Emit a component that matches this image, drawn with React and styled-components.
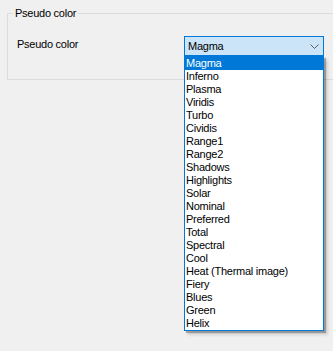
import React from "react";
import styled, { createGlobalStyle } from "styled-components";

const Global = createGlobalStyle`
  html, body { margin: 0; padding: 0; background: #f0f0f0; }
  body { font-family: "Liberation Sans", Arial, sans-serif; font-size: 11px; letter-spacing: -0.25px; color: #000; overflow: hidden; }
  #root { width: 333px; height: 351px; overflow: hidden; }
`;

const Page = styled.div`
  padding: 7px 0 0 7px;
  width: 333px;
  height: 351px;
  box-sizing: border-box;
`;

const GroupBox = styled.fieldset`
  margin: 0;
  width: 360px;
  height: 73px;
  box-sizing: border-box;
  border: 1px solid #dcdcdc;
  padding: 0 0 0 5px;
`;

const Legend = styled.legend`
  padding: 0 2px;
  font-size: 11px;
  line-height: 13px;
  color: #000;
`;

const Row = styled.div`
  display: flex;
  align-items: flex-start;
  margin: 16px 0 0 4px;
`;

const Label = styled.div`
  width: 167px;
  line-height: 13px;
  padding-top: 2px;
`;

const ComboWrap = styled.div`
  position: relative;
  width: 140px;
`;

const Combo = styled.div`
  height: 20px;
  box-sizing: border-box;
  border: 1px solid #0078d7;
  background: #cce4f7;
  display: flex;
  align-items: center;
  justify-content: space-between;
  padding: 0 4px 0 3px;
  line-height: 13px;
`;

const List = styled.ul`
  position: absolute;
  left: 0;
  top: 20px;
  width: 140px;
  box-sizing: border-box;
  margin: 0;
  padding: 0;
  list-style: none;
  background: #fff;
  border: 1px solid #0078d7;
  box-shadow: 2px 2px 1px rgba(0, 0, 0, 0.28), 4px 4px 3px rgba(0, 0, 0, 0.12);
`;

const Item = styled.li`
  height: 13px;
  line-height: 13px;
  padding-left: 1px;
  white-space: nowrap;
  background: ${(p) => (p.$selected ? "#0078d7" : "transparent")};
  color: ${(p) => (p.$selected ? "#fff" : "#000")};
`;

const Chevron = () => (
  <svg width="9" height="5" viewBox="0 0 9 5" style={{ display: "block" }}>
    <path d="M0.5 0.5 L4.5 4.5 L8.5 0.5" fill="none" stroke="#5f5f5f" strokeWidth="1" />
  </svg>
);

const options = [
  "Magma", "Inferno", "Plasma", "Viridis", "Turbo", "Cividis", "Range1", "Range2",
  "Shadows", "Highlights", "Solar", "Nominal", "Preferred", "Total", "Spectral",
  "Cool", "Heat (Thermal image)", "Fiery", "Blues", "Green", "Helix",
];

export default function App() {
  return (
    <>
      <Global />
      <Page>
        <GroupBox>
          <Legend>Pseudo color</Legend>
          <Row>
            <Label>Pseudo color</Label>
            <ComboWrap>
              <Combo>
                <span>Magma</span>
                <Chevron />
              </Combo>
              <List>
                {options.map((o, i) => (
                  <Item key={o} $selected={i === 0}>{o}</Item>
                ))}
              </List>
            </ComboWrap>
          </Row>
        </GroupBox>
      </Page>
    </>
  );
}
